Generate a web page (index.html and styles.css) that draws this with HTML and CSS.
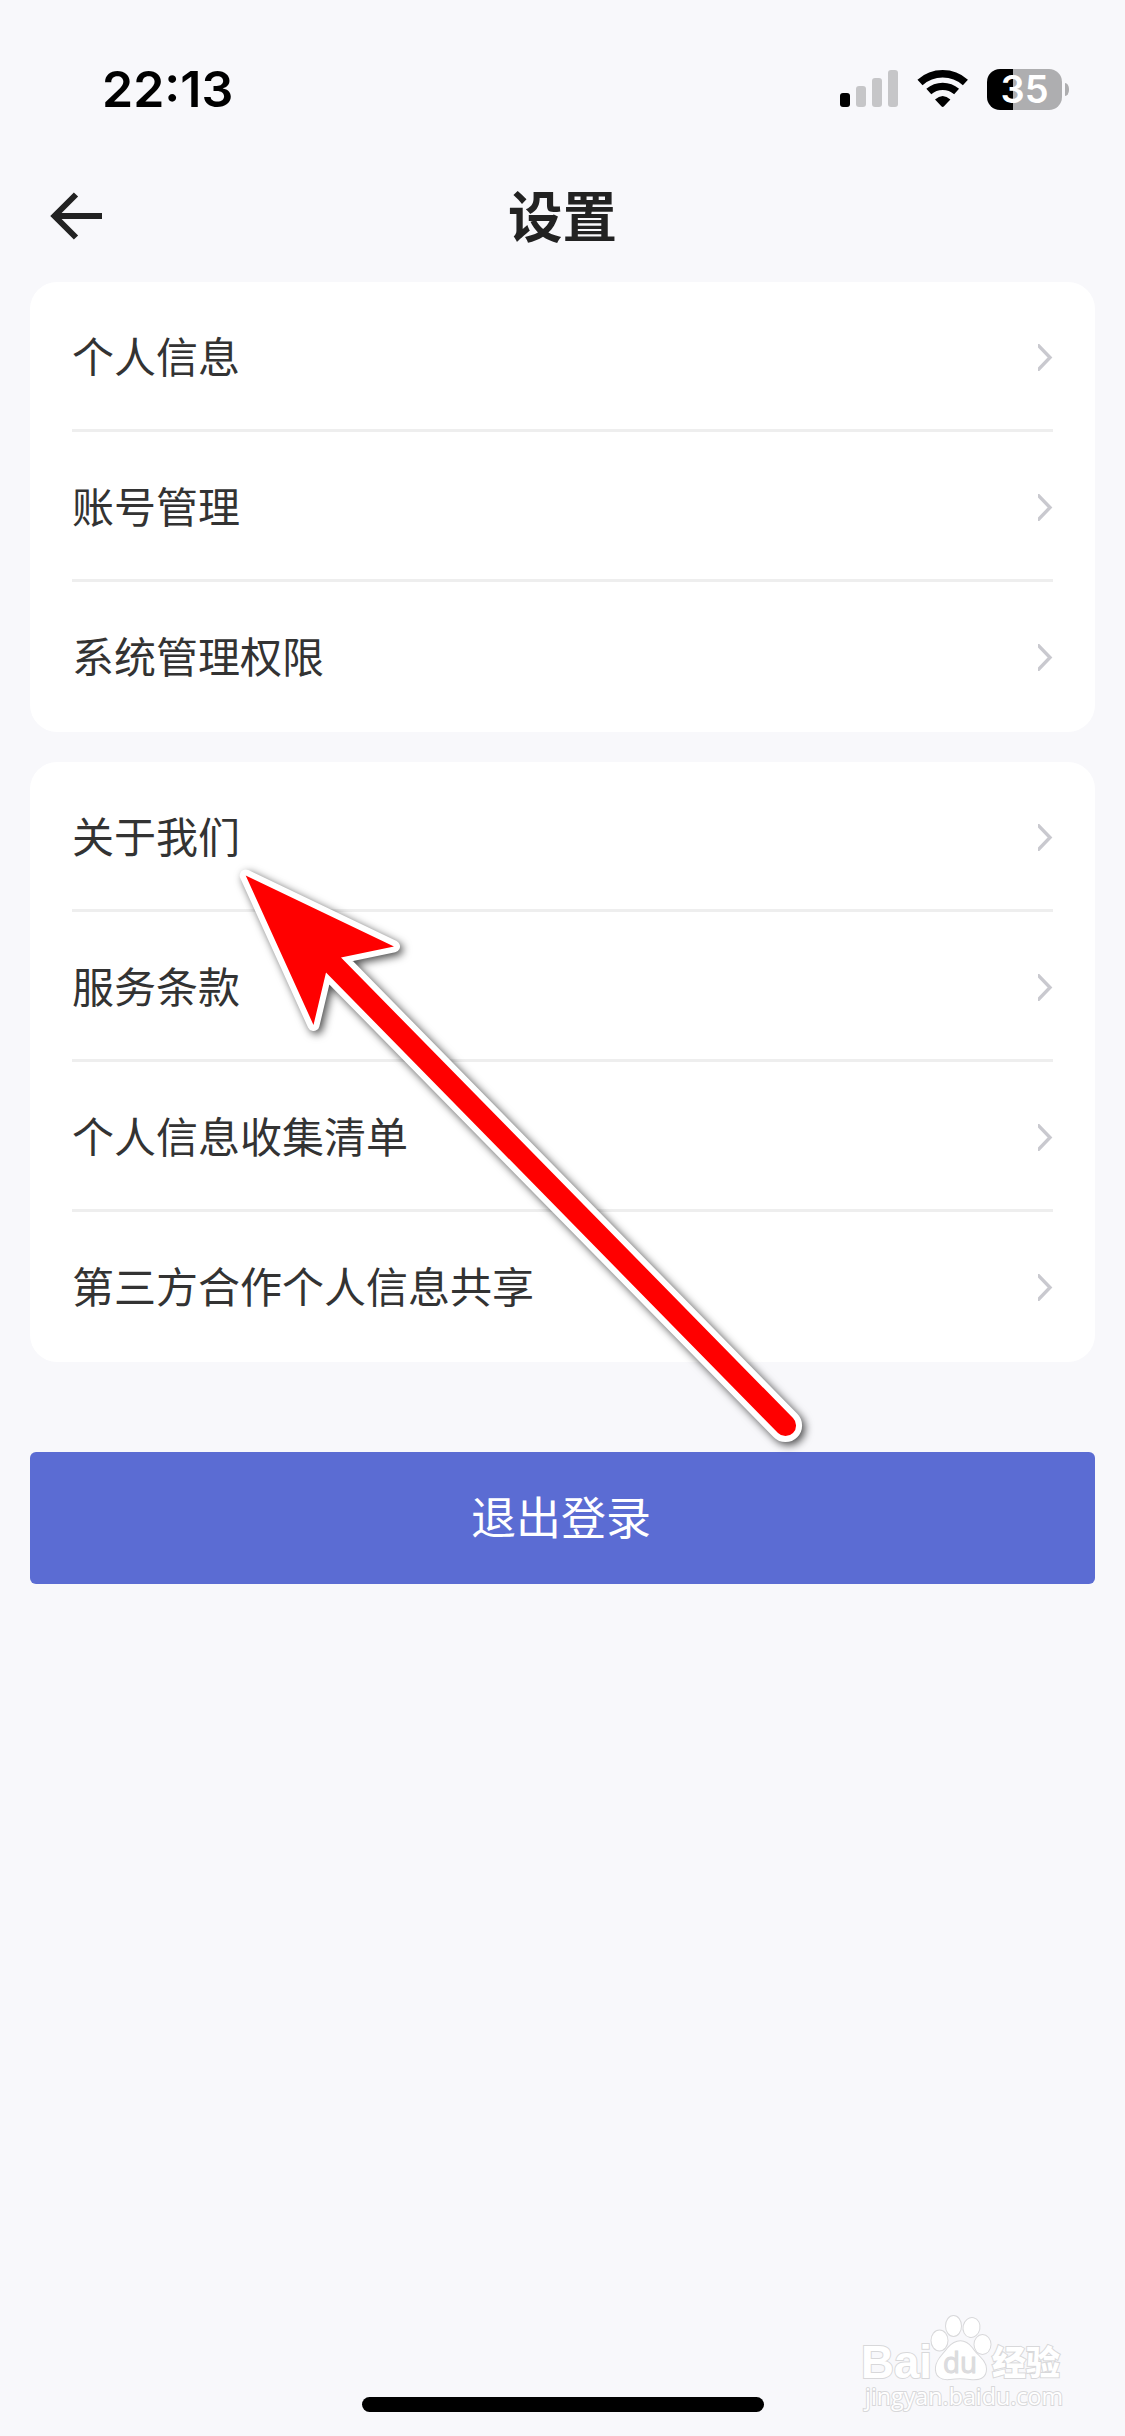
FILE: index.html
```html
<!DOCTYPE html>
<html lang="zh-CN">
<head>
    <meta charset="UTF-8">
    <meta name="viewport" content="width=device-width, initial-scale=1.0">
    <title>设置</title>
    <link rel="stylesheet" href="styles.css">
</head>
<body>
    <div class="status-bar">
        <span class="time">22:13</span>
        <div class="status-icons">
            <svg class="signal" width="58" height="38" viewBox="0 0 58 38">
                <rect x="0" y="23" width="10" height="14" rx="3" fill="#000"/>
                <rect x="16" y="16" width="10" height="21" rx="3" fill="#c6c6c8"/>
                <rect x="32" y="8" width="10" height="29" rx="3" fill="#c6c6c8"/>
                <rect x="48" y="0" width="10" height="37" rx="3" fill="#c6c6c8"/>
            </svg>
            <svg class="wifi" width="52" height="38" viewBox="0 0 52 38">
                <path d="M3 12.5A34 34 0 0 1 48.4 12.5" fill="none" stroke="#000" stroke-width="7.6"/>
                <path d="M11.8 21.6A21 21 0 0 1 39.6 21.6" fill="none" stroke="#000" stroke-width="7.4"/>
                <path d="M18 29.6Q25.7 22.4 33.4 29.6L27 36.3Q25.7 37.5 24.4 36.3Z"/>
            </svg>
            <div class="battery"><span>35</span></div>
        </div>
    </div>

    <div class="header">
        <svg class="back" width="54" height="48" viewBox="0 0 54 48">
            <path d="M26 2.5L4.500 24L26 45.5M4.500 24H52" fill="none" stroke="#222" stroke-width="6"/>
        </svg>
        <h1>设置</h1>
    </div>

    <div class="card">
        <div class="row"><span>个人信息</span><svg class="chevron" viewBox="0 0 15 27"><path d="M-2 -1L12 13.5L-2 28"/></svg></div>
        <div class="row"><span>账号管理</span><svg class="chevron" viewBox="0 0 15 27"><path d="M-2 -1L12 13.5L-2 28"/></svg></div>
        <div class="row"><span>系统管理权限</span><svg class="chevron" viewBox="0 0 15 27"><path d="M-2 -1L12 13.5L-2 28"/></svg></div>
    </div>

    <div class="card">
        <div class="row"><span>关于我们</span><svg class="chevron" viewBox="0 0 15 27"><path d="M-2 -1L12 13.5L-2 28"/></svg></div>
        <div class="row"><span>服务条款</span><svg class="chevron" viewBox="0 0 15 27"><path d="M-2 -1L12 13.5L-2 28"/></svg></div>
        <div class="row"><span>个人信息收集清单</span><svg class="chevron" viewBox="0 0 15 27"><path d="M-2 -1L12 13.5L-2 28"/></svg></div>
        <div class="row"><span>第三方合作个人信息共享</span><svg class="chevron" viewBox="0 0 15 27"><path d="M-2 -1L12 13.5L-2 28"/></svg></div>
    </div>

    <button class="logout-btn">退出登录</button>

    <div class="home-indicator"></div>

    <!-- 指向“关于我们”的箭头 -->
    <svg class="pointer" width="600" height="620" viewBox="220 850 600 620">
        <path d="M245.7 875.5L394 946.5L341 957.5L793 1418A10.5 10.5 0 0 1 778 1433L326 972.5L313.5 1025Z"/>
    </svg>

    <!-- 水印 -->
    <svg class="watermark" width="220" height="110" viewBox="855 2306 220 110">
        <text class="wm-bai" x="861" y="2378" textLength="71" lengthAdjust="spacingAndGlyphs">Bai</text>
        <ellipse cx="939.5" cy="2340.5" rx="8" ry="10"/>
        <ellipse cx="953.5" cy="2326" rx="7.5" ry="10"/>
        <ellipse cx="971.5" cy="2327.5" rx="8" ry="9.5" transform="rotate(12 971.5 2327.5)"/>
        <ellipse cx="982.5" cy="2344.5" rx="8" ry="9.5"/>
        <path d="M948 2348C956 2339 965 2339 972 2348C976 2355 986 2360 986 2369C986 2378 979 2380 970 2379C963 2378 957 2378 950 2379C941 2380 935 2376 936 2367C937 2359 943 2355 948 2348Z"/>
        <text class="wm-du" x="943" y="2373" textLength="34" lengthAdjust="spacingAndGlyphs">du</text>
        <text class="wm-cn" x="992" y="2375">经验</text>
        <text class="wm-url" x="865" y="2405" textLength="198" lengthAdjust="spacingAndGlyphs">jingyan.baidu.com</text>
    </svg>
</body>
</html>
```
FILE: styles.css
```css
* {
    box-sizing: border-box;
}

body {
    margin: 0;
    height: 2436px;
    position: relative;
    display: flex;
    flex-direction: column;
    overflow: hidden;
    background: #f8f8fb;
    color: #333;
    font-family: "Noto Sans CJK SC", sans-serif;
}

svg {
    display: block;
}

.status-bar {
    display: flex;
    align-items: center;
    justify-content: space-between;
    height: 132px;
    padding: 46px 56px 0 102px;
}

.time {
    font-family: Inter, sans-serif;
    font-size: 50px;
    font-weight: 600;
    line-height: 60px;
    color: #000;
}

.status-icons {
    display: flex;
    align-items: center;
}

.wifi {
    margin-left: 19px;
}

.battery {
    position: relative;
    width: 75px;
    height: 41px;
    margin-left: 18px;
    margin-right: 7px;
    border-radius: 13px;
    background: linear-gradient(90deg, #000 26px, #aeaeb0 26px);
    color: #fff;
    font-family: Inter, sans-serif;
    font-size: 38px;
    font-weight: 600;
    line-height: 41px;
    text-align: center;
}

.battery::after {
    content: "";
    position: absolute;
    left: 78px;
    top: 14px;
    width: 4px;
    height: 13px;
    border-radius: 0 4px 4px 0 / 0 6px 6px 0;
    background: #aeaeb0;
}

.header {
    display: grid;
    grid-template-columns: 54px 1fr 54px;
    align-items: center;
    height: 150px;
    padding: 18px 50px 0;
}

h1 {
    margin: 0 0 4px;
    font-size: 54.5px;
    font-weight: 700;
    line-height: 80px;
    text-align: center;
    color: #222;
}

.card {
    margin: 0 30px 30px;
    padding: 0 42px;
    border-radius: 27px;
    background: #fff;
}

.row {
    display: flex;
    align-items: center;
    justify-content: space-between;
    height: 150px;
    border-bottom: 3px solid #eee;
    font-size: 42px;
    line-height: 60px;
}

.row span {
    margin-bottom: 1px;
}

.row:last-child {
    border-bottom-color: transparent;
}

.chevron {
    width: 15px;
    height: 27px;
    margin-top: 3px;
    fill: none;
    stroke: #c9c9cf;
    stroke-width: 3.4;
}

.logout-btn {
    height: 132px;
    margin: 60px 30px 0;
    padding: 0 3px 5px 0;
    border: none;
    border-radius: 6px;
    background: #5b6cd3;
    color: #fff;
    font-family: inherit;
    font-size: 45px;
}

.home-indicator {
    width: 402px;
    height: 15px;
    margin: auto auto 24px;
    border-radius: 8px;
    background: #000;
}

.pointer {
    position: absolute;
    left: 220px;
    top: 850px;
    fill: #f00;
    stroke: #fff;
    stroke-width: 12;
    stroke-linejoin: round;
    paint-order: stroke;
    filter: drop-shadow(3px 3px 4px rgba(0, 0, 0, 0.7));
}

.watermark {
    position: absolute;
    left: 855px;
    top: 2306px;
    fill: #fff;
    stroke: #d8d8da;
    stroke-width: 2;
    paint-order: stroke;
}

.wm-bai {
    font: 700 46px "Liberation Sans", sans-serif;
}

.wm-du {
    font: 400 29px "Open Sans", sans-serif;
    fill: #dcdcde;
    stroke-width: 1;
}

.wm-cn {
    font: 900 34px "Noto Sans CJK SC", sans-serif;
}

.wm-url {
    font: 400 24px "Open Sans", sans-serif;
}
```
